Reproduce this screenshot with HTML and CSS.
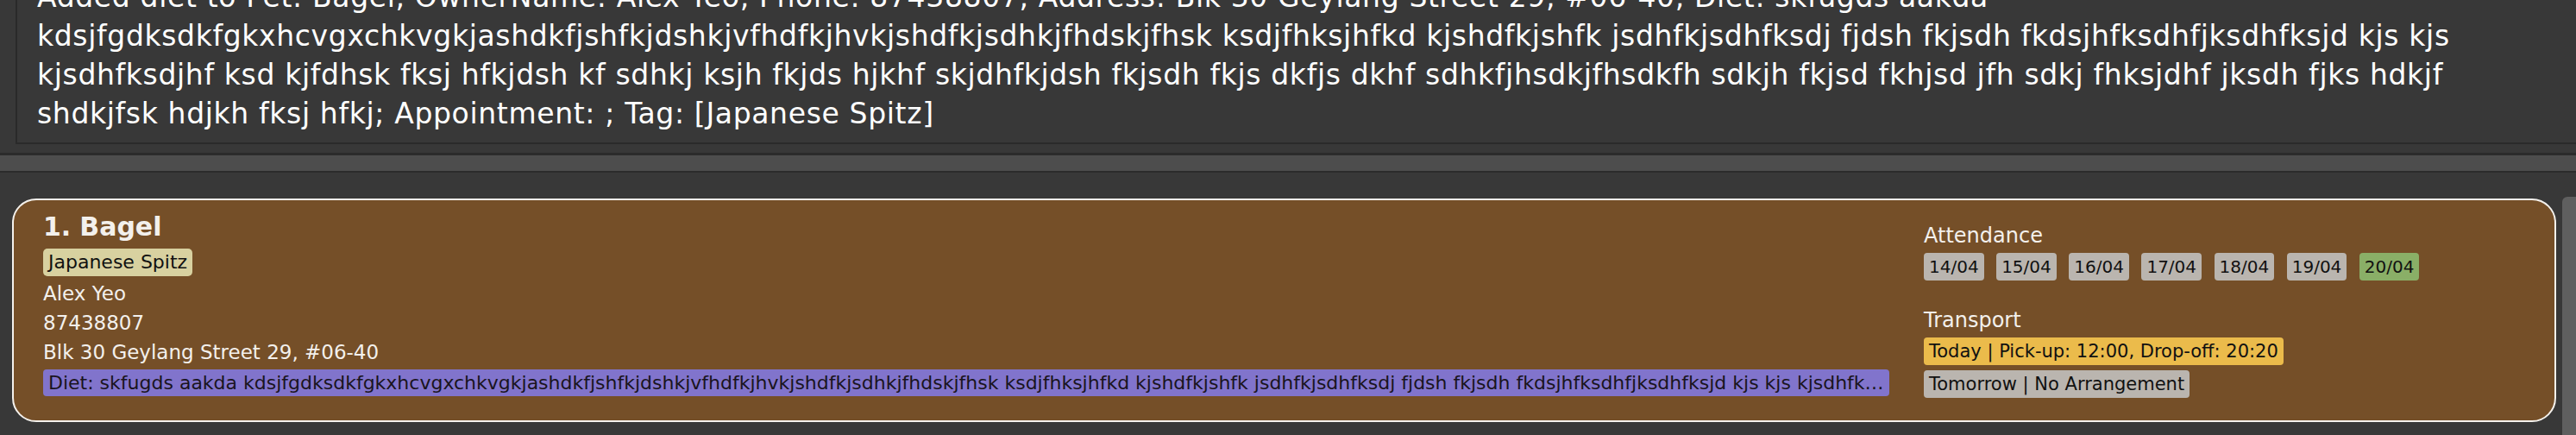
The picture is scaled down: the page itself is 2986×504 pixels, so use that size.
FILE: index.html
```html
<!DOCTYPE html>
<html lang="en">
<head>
<meta charset="utf-8">
<title>Pet List</title>
<link rel="stylesheet" href="styles.css">
</head>
<body>
<div class="app">
  <div class="result-pane">
    <div class="result-box">
      <p class="result-text">Added diet to Pet: Bagel, OwnerName: Alex Yeo, Phone: 87438807, Address: Blk 30 Geylang Street 29, #06-40, Diet: skfugds aakda<br>kdsjfgdksdkfgkxhcvgxchkvgkjashdkfjshfkjdshkjvfhdfkjhvkjshdfkjsdhkjfhdskjfhsk ksdjfhksjhfkd kjshdfkjshfk jsdhfkjsdhfksdj fjdsh fkjsdh fkdsjhfksdhfjksdhfksjd kjs kjs<br>kjsdhfksdjhf ksd kjfdhsk fksj hfkjdsh kf sdhkj ksjh fkjds hjkhf skjdhfkjdsh fkjsdh fkjs dkfjs dkhf sdhkfjhsdkjfhsdkfh sdkjh fkjsd fkhjsd jfh sdkj fhksjdhf jksdh fjks hdkjf<br>shdkjfsk hdjkh fksj hfkj; Appointment: ; Tag: [Japanese Spitz]</p>
    </div>
  </div>
  <div class="divider"></div>
  <div class="list-pane">
    <div class="card">
      <div class="card-main">
        <div class="name-row"><span class="pet-id">1.</span><span class="pet-name">Bagel</span></div>
        <div class="tags"><span class="tag">Japanese Spitz</span></div>
        <div class="field first">Alex Yeo</div>
        <div class="field">87438807</div>
        <div class="field">Blk 30 Geylang Street 29, #06-40</div>
        <div class="diet">Diet: skfugds aakda kdsjfgdksdkfgkxhcvgxchkvgkjashdkfjshfkjdshkjvfhdfkjhvkjshdfkjsdhkjfhdskjfhsk ksdjfhksjhfkd kjshdfkjshfk jsdhfkjsdhfksdj fjdsh fkjsdh fkdsjhfksdhfjksdhfksjd kjs kjs kjsdhfksdjhf ksd kjfdhsk fksj hfkjdsh kf sdhkj ksjh fkjds hjkhf skjdhfkjdsh fkjsdh fkjs dkfjs dkhf sdhkfjhsdkjfhsdkfh sdkjh fkjsd fkhjsd jfh sdkj fhksjdhf jksdh fjks hdkjf shdkjfsk hdjkh fksj hfkj</div>
      </div>
      <div class="card-side">
        <div class="section-title">Attendance</div>
        <div class="dates">
          <span class="chip">14/04</span>
          <span class="chip">15/04</span>
          <span class="chip">16/04</span>
          <span class="chip">17/04</span>
          <span class="chip">18/04</span>
          <span class="chip">19/04</span>
          <span class="chip present">20/04</span>
        </div>
        <div class="section-title transport-title">Transport</div>
        <div class="transport">
          <span class="chip trans today">Today | Pick-up: 12:00, Drop-off: 20:20</span>
          <span class="chip trans">Tomorrow | No Arrangement</span>
        </div>
      </div>
    </div>
    <div class="scrollbar"></div>
  </div>
</div>
</body>
</html>
```

FILE: styles.css
```css
* {
  box-sizing: border-box;
}

html, body {
  margin: 0;
  padding: 0;
}

body {
  width: 2986px;
  height: 504px;
  overflow: hidden;
  background: #383838;
  font-family: "DejaVu Sans", sans-serif;
  color: #ffffff;
}

.app {
  display: flex;
  flex-direction: column;
  height: 504px;
}

/* ---------- result display ---------- */
.result-pane {
  height: 177px;
  flex: none;
  overflow: hidden;
  display: flex;
  flex-direction: column;
  justify-content: flex-end;
  padding: 0 0 10px 18px;
}

.result-box {
  flex: none;
  border-left: 2px solid #2a2a2a;
  border-bottom: 2px solid #2a2a2a;
  padding: 0 0 11px 23px;
}

.result-text {
  margin: 0;
  font-size: 33px;
  line-height: 45px;
  letter-spacing: 0.65px;
  white-space: nowrap;
  color: #ffffff;
}

/* ---------- split divider ---------- */
.divider {
  flex: none;
  height: 23px;
  background: #4d4d4d;
  border-top: 3px solid #2b2b2b;
  border-bottom: 2px solid #2b2b2b;
}

/* ---------- list ---------- */
.list-pane {
  flex: 1;
  display: flex;
  align-items: flex-start;
  padding: 30px 0 0 14px;
  overflow: hidden;
}

.card {
  flex: 1;
  display: grid;
  grid-template-columns: minmax(0, 1fr) 697px;
  column-gap: 40px;
  background: #754f28;
  border: 2px solid #f4f1ec;
  border-radius: 28px;
  padding: 14px 34px 26px 34px;
}

.card-main {
  display: flex;
  flex-direction: column;
  align-items: flex-start;
  min-width: 0;
}

.name-row {
  display: flex;
  font-weight: bold;
  font-size: 30px;
  line-height: 34px;
  color: #f3f0ec;
}

.pet-name {
  margin-left: 10px;
}

.tags {
  display: flex;
  margin-top: 8px;
}

.tag {
  background: #d8d1a0;
  color: #111111;
  font-size: 22px;
  line-height: 32px;
  padding: 0 6px;
  border-radius: 5px;
}

.field {
  font-size: 23px;
  line-height: 34px;
  color: #f3f0ec;
}

.field.first {
  margin-top: 3px;
}

.diet {
  margin-top: 3px;
  align-self: stretch;
  background: #8174cc;
  color: #1a1420;
  font-size: 22px;
  line-height: 31px;
  padding: 0 6px;
  border-radius: 4px;
  white-space: nowrap;
  overflow: hidden;
  text-overflow: ellipsis;
}

/* ---------- side column ---------- */
.card-side {
  display: flex;
  flex-direction: column;
  align-items: flex-start;
  padding-top: 12px;
}

.section-title {
  font-size: 24px;
  line-height: 30px;
  color: #f3f0ec;
}

.transport-title {
  margin-top: 31px;
}

.dates {
  display: flex;
  gap: 14.5px;
  margin-top: 5px;
}

.chip {
  background: #bab5af;
  color: #111111;
  font-size: 20px;
  line-height: 32px;
  padding: 0 6px;
  border-radius: 4px;
  white-space: nowrap;
}

.chip.present {
  background: #8aaf67;
}

.transport {
  display: flex;
  flex-direction: column;
  align-items: flex-start;
  gap: 6px;
  margin-top: 5px;
}

.chip.trans {
  font-size: 21px;
}

.chip.today {
  background: #ebbb4b;
}

/* ---------- scrollbar ---------- */
.scrollbar {
  flex: none;
  width: 16px;
  height: 290px;
  margin-left: 7px;
  margin-top: -2px;
  background: #5f5f5f;
  border-radius: 6px 0 0 0;
}
```
